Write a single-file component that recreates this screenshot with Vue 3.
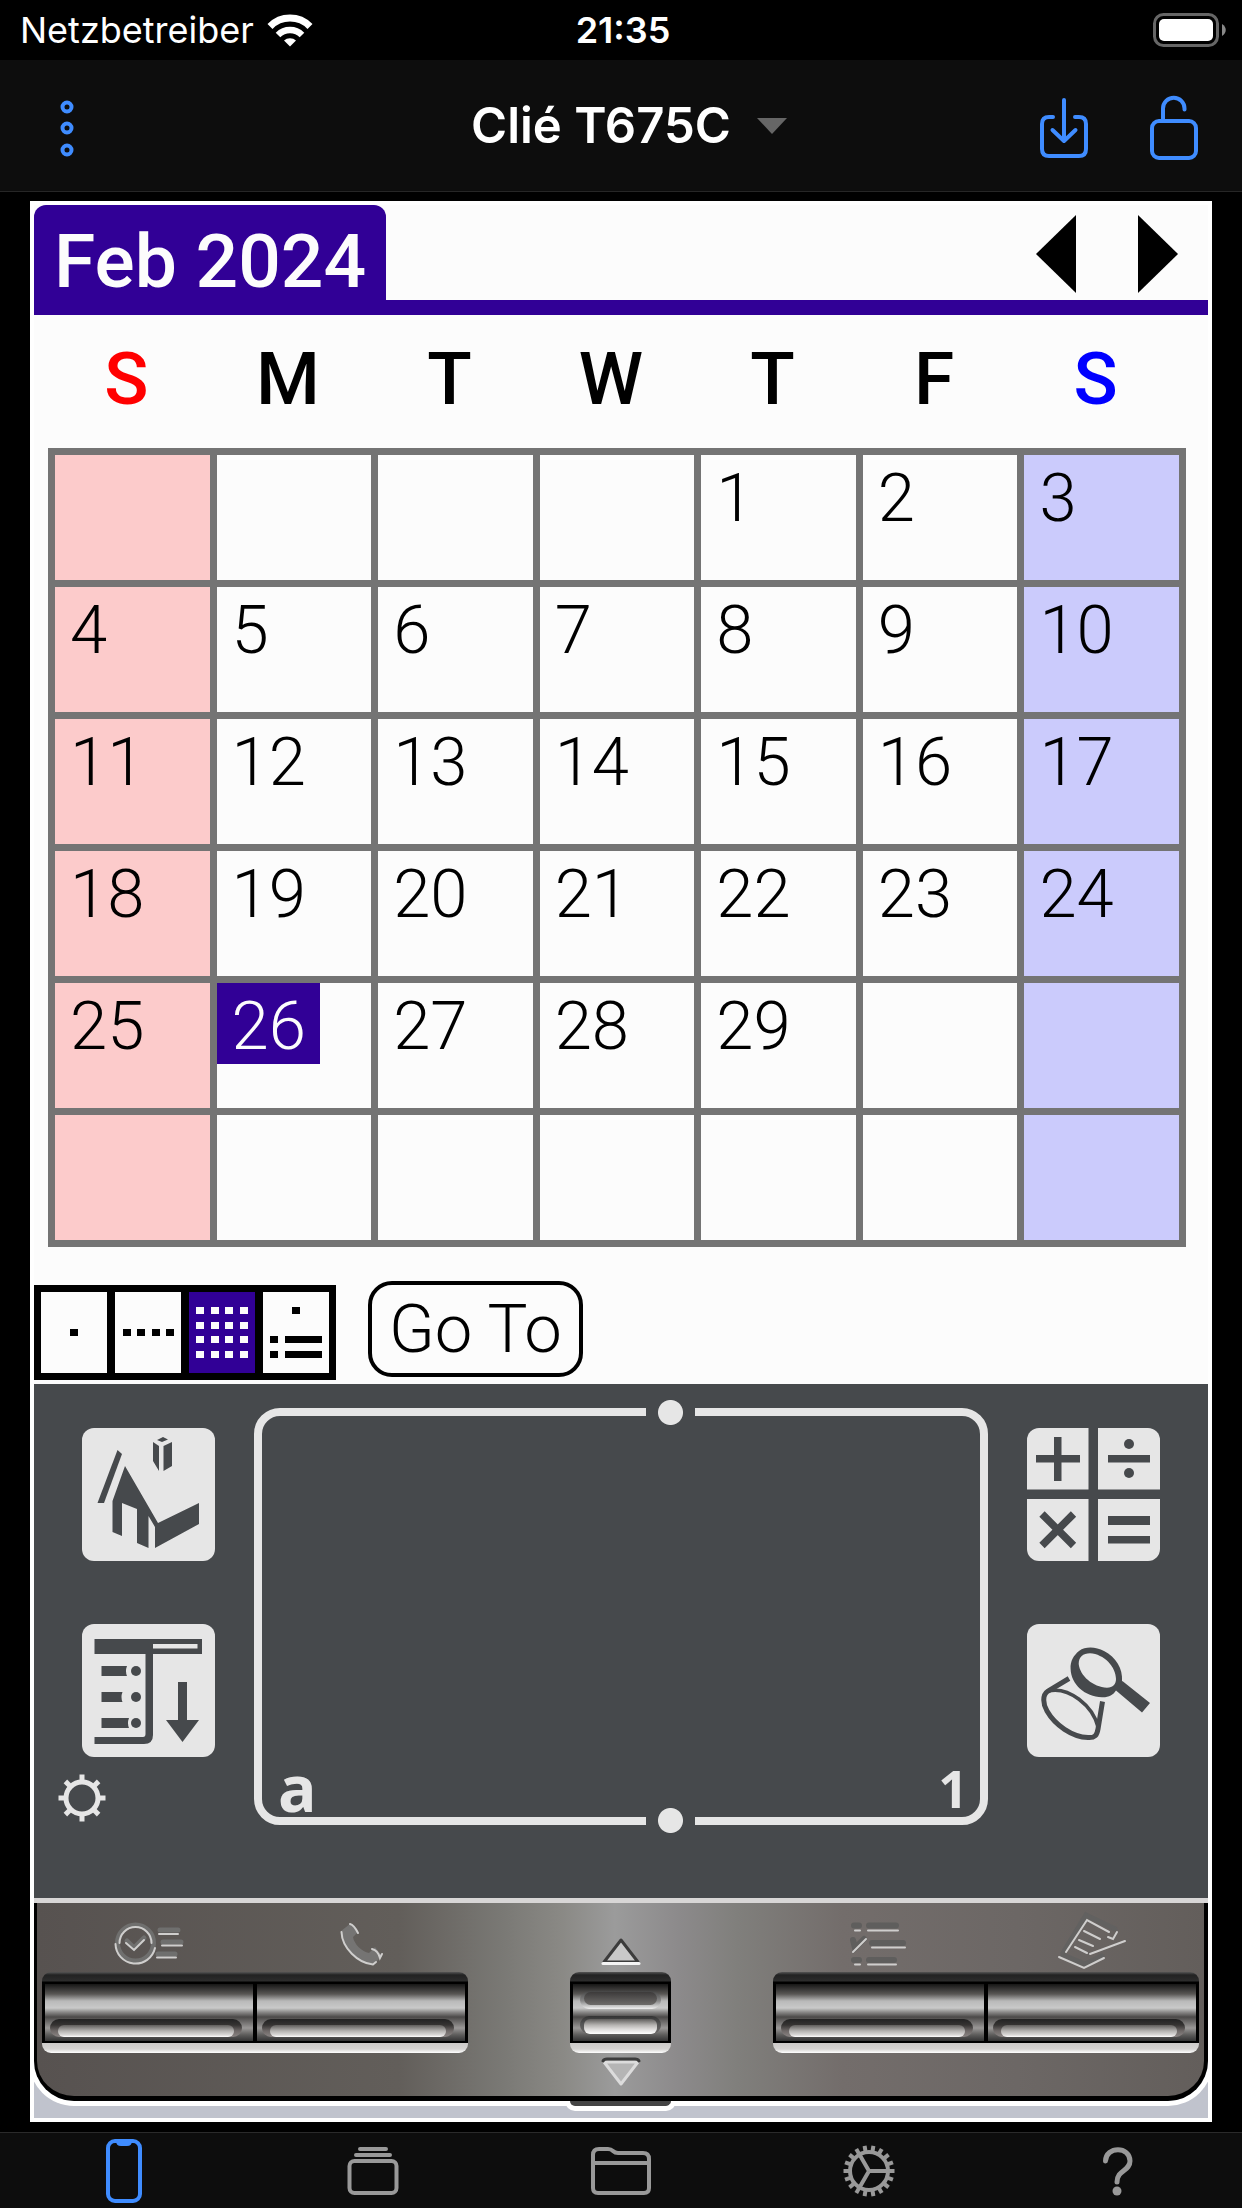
<script setup>
import { ref } from 'vue'

const weekdays = ['S', 'M', 'T', 'W', 'T', 'F', 'S']
const firstOffset = 4
const daysInMonth = 29
const selected = ref(26)
const view = ref('month')

const weeks = Array.from({ length: 6 }, (_, r) =>
  Array.from({ length: 7 }, (_, c) => {
    const day = r * 7 + c - firstOffset + 1
    return day >= 1 && day <= daysInMonth ? day : null
  })
)

const views = [
  { id: 'day', label: 'Day', marks: [[29, 37, 8]] },
  { id: 'week', label: 'Week', marks: [8, 22, 37, 51].map((x) => [x, 37, 8]) },
  { id: 'month', label: 'Month', marks: [15, 30, 44, 59].flatMap((y) => [7, 22, 36, 51].map((x) => [x, y, 8])) },
  { id: 'agenda', label: 'Agenda', marks: [[29, 15, 8], [7, 44, 8], [22, 44, 37], [7, 59, 8], [22, 59, 37]] }
]

const banks = [
  [
    { label: 'Date Book', icon: 'date' },
    { label: 'Address', icon: 'phone' }
  ],
  [
    { label: 'To Do', icon: 'todo' },
    { label: 'Note Pad', icon: 'note' }
  ]
]

const teeth = Array.from({ length: 18 }, (_, i) => i * 20 + 10)
const rays = [0, 45, 90, 135, 180, 225, 270, 315]
</script>

<template>
  <div class="app">
    <div class="status">
      <div class="carrier">
        <span>Netzbetreiber</span>
        <svg width="46" height="34" viewBox="0 0 46 34" fill="none" stroke="#fff" stroke-width="7">
          <path d="M3 13.500A28 28 0 0 1 43 13.500" />
          <path d="M11 22A17 17 0 0 1 35 22" stroke-width="6.500" />
          <path d="M17 27.500A9 9 0 0 1 29 27.500L23 33.500Z" fill="#fff" stroke="none" />
        </svg>
      </div>
      <span class="clock">21:35</span>
      <svg class="battery" width="73" height="34" viewBox="0 0 73 34">
        <rect x="1.500" y="1.500" width="63" height="31" rx="9" fill="none" stroke="#666" stroke-width="3" />
        <rect x="6" y="6" width="54" height="22" rx="5" fill="#fff" />
        <path d="M69 11c5 3 5 9 0 12z" fill="#888" />
      </svg>
    </div>

    <header class="toolbar">
      <button class="icon-btn" aria-label="Menu">
        <svg width="14" height="62" viewBox="0 0 14 62" fill="none" stroke="#3f8cff" stroke-width="4">
          <circle cx="7" cy="12" r="4.500" /><circle cx="7" cy="33" r="4.500" /><circle cx="7" cy="55" r="4.500" />
        </svg>
      </button>
      <button class="title">
        Clié T675C
        <svg width="30" height="16" viewBox="0 0 30 16"><path d="M0 0H30L15 16Z" fill="#666" /></svg>
      </button>
      <div class="actions">
        <button class="icon-btn" aria-label="Save">
          <svg width="48" height="68" viewBox="0 0 48 68" fill="none" stroke="#3f8cff" stroke-width="4" stroke-linecap="round" stroke-linejoin="round">
            <path d="M13 25H9Q2 25 2 32V57Q2 64 9 64H39Q46 64 46 57V32Q46 25 39 25H35" />
            <path d="M24 8V48M12.500 38L24 49L35.500 38" />
          </svg>
        </button>
        <button class="icon-btn" aria-label="Unlock">
          <svg width="48" height="68" viewBox="0 0 48 68" fill="none" stroke="#3f8cff" stroke-width="4" stroke-linecap="round" stroke-linejoin="round">
            <rect x="2" y="29" width="44" height="37" rx="7" />
            <path d="M13 29V16.500A10.750 10.750 0 0 1 34.500 16.500V17.500" />
          </svg>
        </button>
      </div>
    </header>

    <main class="device">
      <section class="screen">
        <div class="month-bar">
          <h1 class="month">Feb 2024</h1>
          <div class="pager">
            <button aria-label="Previous month">
              <svg width="40" height="78" viewBox="0 0 40 78"><path d="M40 0V78L0 39Z" /></svg>
            </button>
            <button aria-label="Next month">
              <svg width="40" height="78" viewBox="0 0 40 78"><path d="M0 0V78L40 39Z" /></svg>
            </button>
          </div>
        </div>

        <table class="calendar">
          <thead>
            <tr>
              <th v-for="(d, i) in weekdays" :key="i" :class="{ sun: i === 0, sat: i === 6 }">{{ d }}</th>
            </tr>
          </thead>
          <tbody>
            <tr v-for="(week, r) in weeks" :key="r">
              <td v-for="(day, c) in week" :key="c" :class="{ sun: c === 0, sat: c === 6 }">
                <button v-if="day" class="day" :class="{ on: day === selected }" @click="selected = day">{{ day }}</button>
              </td>
            </tr>
          </tbody>
        </table>

        <div class="controls">
          <div class="views">
            <button
              v-for="v in views" :key="v.id" :aria-label="v.label"
              :aria-pressed="view === v.id" :class="{ on: view === v.id }" @click="view = v.id"
            >
              <svg width="66" height="81" viewBox="0 0 66 81" fill="currentColor">
                <rect v-for="(m, i) in v.marks" :key="i" :x="m[0]" :y="m[1]" :width="m[2]" height="7" />
              </svg>
            </button>
          </div>
          <button class="goto">Go To</button>
        </div>
      </section>

      <section class="silk">
        <div class="silk-col">
          <button class="silk-btn" aria-label="Home">
            <svg width="133" height="133" viewBox="0 0 133 133">
              <path d="M71 14L77 18V43L71 33ZM81.500 18L90 14V38L81.500 43ZM75 12L81 9L86 11.500L80 14Z" />
              <path d="M35.500 22L40 26L22 75H15.500Z" />
              <path d="M43 38L76 95L117 75V96L73 120V99L66.500 88V120L55 115V81L40 75V108L30.500 104V73Z" />
            </svg>
          </button>
          <button class="silk-btn" aria-label="Application menu">
            <svg width="133" height="133" viewBox="0 0 133 133">
              <path fill-rule="evenodd" d="M12.500 15H120V30H71V111Q71 120 62 120H12.500V113H61Q63.500 113 63.500 110V30H12.500ZM71 20V24.500H115.500V20Z" />
              <path d="M19.500 42H45Q43 47 45 52H19.500ZM19.500 68H40.500Q38.500 73 40.500 78H19.500ZM19.500 94H47Q45 99 47 104H19.500Z" />
              <circle cx="54" cy="47" r="5" /><circle cx="54" cy="73" r="5" /><circle cx="54" cy="99" r="5" />
              <path d="M96 58H105V96H117L100.500 118L84 96H96Z" />
            </svg>
          </button>
          <button class="contrast" aria-label="Contrast">
            <svg width="48" height="48" viewBox="-24 -24 48 48" fill="none" stroke="#e6e6e6" stroke-width="5">
              <circle r="16" />
              <path v-for="a in rays" :key="a" d="M0 -17V-23.500" :transform="`rotate(${a})`" />
            </svg>
          </button>
        </div>

        <div class="graffiti">
          <i class="pin top"></i>
          <i class="pin bottom"></i>
          <span class="letters">a</span>
          <span class="digits">1</span>
        </div>

        <div class="silk-col">
          <button class="silk-btn calc" aria-label="Calculator">
            <svg width="133" height="133" viewBox="0 0 133 133">
              <path d="M61.500 0H71V61.500H133V71H71V133H61.500V71H0V61.500H61.500Z" />
              <path d="M27 9H34.500V27H53V34.500H34.500V53H27V34.500H9V27H27Z" />
              <path d="M81 27H123V34.500H81ZM81 88H123V97H81ZM81 108H123V115.500H81Z" />
              <circle cx="102" cy="16" r="5" /><circle cx="102" cy="45" r="5" />
              <path d="M15 86L46.500 117.500M46.500 86L15 117.500" stroke="#46494c" stroke-width="7.500" />
            </svg>
          </button>
          <button class="silk-btn" aria-label="Find">
            <svg width="133" height="133" viewBox="0 0 133 133">
              <path fill-rule="evenodd" d="M43.600 45C43 37 47 31 52 27C59 22 69 23 77 27C89 33 96 45 95 57L96 57.500L123 79L115 88.500L89 66.500C86 71 82 73.500 75 73.300C58 73 44 60 43.600 45ZM51.700 40C53 52 66 63 80 63.700C86 63.700 89 60 89 55C89 43 77 30 63 29.300C56 29.300 51.700 33 51.700 40Z" />
              <g fill="none" stroke="#46494c" stroke-width="5">
                <path d="M42 54.500L21 67C15 71 16 80 20 87C28 101 45 113 61 113.500C68 114 70 111 71 105L75.500 77.500" />
                <path d="M21 67C42 62 66 82 71 103" stroke-width="3.500" />
              </g>
            </svg>
          </button>
        </div>
      </section>

      <section class="case">
        <div class="panel">
          <template v-for="(bank, b) in banks" :key="b">
            <div class="bank">
              <div class="glyphs">
                <svg v-for="k in bank" :key="k.icon" width="72" height="60" viewBox="0 0 72 60" fill="none" stroke-linecap="round">
                  <g v-if="k.icon === 'date'">
                    <g stroke="#6f6f6e" stroke-width="5">
                      <circle cx="22.500" cy="32" r="18" />
                      <path d="M14 30L21 37L31 27M47 19H65M50 31H68M45 43H62" />
                    </g>
                    <g stroke="#cfcecd" stroke-width="2">
                      <circle cx="22.500" cy="32" r="16" stroke-dasharray="50 51" transform="rotate(180 22.500 32)" />
                      <path d="M2.500 33A20 20 0 0 0 42 37M13 32L21 39L31 29M46 23H65M49 34.500H69M44 46.500H63" />
                    </g>
                  </g>
                  <g v-else-if="k.icon === 'phone'">
                    <path d="M15 20L24 13L32 21L27 26C28 33 36 41 43 42L49 36L56 45L48 53C32 52 15 37 15 20Z" fill="#757473" />
                    <g stroke="#cfcecd" stroke-width="2">
                      <path d="M15.500 21C16 37 32 52 47 53.500L50 51M24 13C28 14 30 18 32 22M46 38C50 39 53 43 54 47L56 43" />
                    </g>
                  </g>
                  <g v-else-if="k.icon === 'todo'">
                    <path d="M10 14.500H15M25 14.500H52M28 32H59M25 49H50M10 49H15M9 29L11 37L20 28" stroke="#5f5e5d" stroke-width="6" />
                    <path d="M11 19.500H16M24 19.500H54M28 36.500H61M24 53.500H52M11 53.500H16M9 41L22 28" stroke="#cfcecd" stroke-width="2" />
                  </g>
                  <g v-else>
                    <path d="M6 42L29 4L58 18M6 44L28 53L45 45" stroke="#626160" stroke-width="5" />
                    <path d="M9 41L30 9L52 21M2 46L27 57L47 47M27 20L43 28M22 29L36 35M18 36L30 42M33 43L68 30M51 26L56 28L60 21" stroke="#cfcecd" stroke-width="2" />
                  </g>
                </svg>
              </div>
              <div class="rack">
                <button v-for="k in bank" :key="k.label" class="key" :aria-label="k.label"><i class="groove"></i></button>
              </div>
            </div>
            <div v-if="b === 0" class="rocker">
              <svg width="42" height="30" viewBox="0 0 42 30">
                <path d="M21 3L38 25H4Z" fill="#c9c9c9" stroke="#3c3c3c" stroke-width="3" stroke-linejoin="round" />
                <path d="M3 26.500H39" stroke="#f4f4f4" stroke-width="3" stroke-linecap="round" />
              </svg>
              <div class="rack">
                <button class="key wheel" aria-label="Scroll"><i class="groove dim"></i><i class="groove"></i></button>
              </div>
              <svg width="42" height="30" viewBox="0 0 42 30">
                <path d="M21 27L38 5H4Z" fill="#b5b5b5" stroke="#dcdcdc" stroke-width="3" stroke-linejoin="round" />
                <path d="M3 4Q4 2 7 2H35Q38 2 39 4" fill="none" stroke="#3c3c3c" stroke-width="3" stroke-linecap="round" />
              </svg>
            </div>
          </template>
        </div>
      </section>
    </main>

    <nav class="tabs">
      <a href="#device" aria-label="Device" class="active">
        <svg width="36" height="64" viewBox="0 0 36 64" fill="none" stroke="currentColor" stroke-width="4">
          <rect x="2" y="2" width="32" height="60" rx="7" />
          <path d="M10 2H26Q26 7 21 7H15Q10 7 10 2Z" fill="currentColor" stroke="none" />
        </svg>
      </a>
      <a href="#sessions" aria-label="Sessions">
        <svg width="52" height="64" viewBox="0 0 52 64" fill="none" stroke="currentColor" stroke-width="4" stroke-linecap="round">
          <path d="M13 10H39M9 16H43" />
          <rect x="2.500" y="22" width="47" height="32" rx="5" />
        </svg>
      </a>
      <a href="#files" aria-label="Files">
        <svg width="60" height="64" viewBox="0 0 60 64" fill="none" stroke="currentColor" stroke-width="4">
          <path d="M2 16Q2 10 8 10H17Q20 10 22 12Q24 14 27 14H52Q58 14 58 20V49Q58 54 53 54H7Q2 54 2 49ZM2 24H58" />
        </svg>
      </a>
      <a href="#settings" aria-label="Settings">
        <svg width="52" height="64" viewBox="-26 -32 52 64" fill="none" stroke="currentColor" stroke-width="4">
          <circle r="19" />
          <path v-for="a in teeth" :key="a" d="M0 -20V-25.500" :transform="`rotate(${a})`" />
          <path d="M0 0H19M0 0L-9.500 -16.500M0 0L-9.500 16.500" />
        </svg>
      </a>
      <a href="#help" aria-label="Help">
        <svg width="30" height="64" viewBox="0 0 30 64" fill="none" stroke="currentColor" stroke-width="5" stroke-linecap="round">
          <path d="M2.500 22C3 7 27 7 27 22C27 32 14 31 14 43" />
          <circle cx="14" cy="52" r="4.500" fill="currentColor" stroke="none" />
        </svg>
      </a>
    </nav>
  </div>
</template>

<style>
body {
  margin: 0;
  background: #000;
}
</style>

<style scoped>
.app {
  display: flex;
  flex-direction: column;
  min-height: 100vh;
  background: #000;
  color: #fff;
  font-family: Inter, "Liberation Sans", sans-serif;
}
button {
  padding: 0;
  border: 0;
  background: none;
  color: inherit;
  font: inherit;
}
svg {
  display: block;
}

.status {
  display: grid;
  grid-template-columns: 1fr auto 1fr;
  align-items: center;
  height: 60px;
  padding: 0 16px 0 20px;
  font-size: 36px;
}
.carrier {
  display: flex;
  align-items: center;
  gap: 13px;
}
.clock {
  font-weight: 600;
}
.battery {
  justify-self: end;
}

.toolbar {
  display: grid;
  grid-template-columns: 1fr auto 1fr;
  align-items: center;
  height: 131px;
  padding: 0 44px 0 60px;
  background: #0d0d0d;
  border-bottom: 1px solid #262626;
}
.title {
  display: flex;
  align-items: center;
  gap: 26px;
  font-size: 49px;
  font-weight: 600;
}
.actions {
  display: flex;
  justify-content: flex-end;
  gap: 62px;
}

.device {
  margin: 9px 30px 8px;
  border: 4px solid #fff;
}
.screen {
  background: #fcfcfc;
  color: #000;
  font-family: Roboto, "Liberation Sans", sans-serif;
}
.month-bar {
  display: flex;
  justify-content: space-between;
  border-bottom: 15px solid #310096;
}
.month {
  box-sizing: border-box;
  margin: 0;
  height: 95px;
  padding: 17px 20px 0;
  border-radius: 12px 12px 0 0;
  background: #310096;
  color: #fcfcfc;
  font-size: 75px;
  font-weight: 500;
  line-height: 78px;
}
.pager {
  display: flex;
  gap: 62px;
  padding: 10px 30px 0 0;
}
.pager button {
  align-self: flex-start;
}

.calendar {
  width: calc(100% - 36px);
  margin: 0 22px 0 14px;
  table-layout: fixed;
  border-collapse: collapse;
}
.calendar th {
  height: 128px;
  padding: 0 12px 5px 0;
  font-size: 73px;
  font-weight: 500;
  line-height: 100px;
}
th.sun {
  color: #f00;
}
th.sat {
  color: #00f;
}
.calendar td {
  height: 125px;
  padding: 0;
  border: 7px solid #747474;
  vertical-align: top;
}
td.sun {
  background: #fccbcb;
}
td.sat {
  background: #cbcbfc;
}
.day {
  display: block;
  padding: 5px 14px 0 15px;
  font-size: 67px;
  font-weight: 300;
  line-height: 76px;
}
.day.on {
  background: #310096;
  color: #fcfcfc;
}

.controls {
  display: flex;
  align-items: flex-start;
  gap: 32px;
  padding: 34px 0 4px;
}
.views {
  display: flex;
  gap: 8px;
  margin-top: 4px;
  padding: 7px;
  background: #000;
}
.views button {
  background: #fcfcfc;
}
.views .on {
  background: #310096;
  color: #fcfcfc;
}
.goto {
  height: 96px;
  padding: 0 17px;
  border: 4px solid #000;
  border-radius: 24px;
  font-size: 67px;
  font-weight: 300;
  line-height: 88px;
}

.silk {
  display: flex;
  gap: 39px;
  padding: 24px 48px 73px;
  background: #46494c;
  border-bottom: 5px solid #d8d6d6;
}
.silk-col {
  flex: none;
  width: 133px;
  padding-top: 20px;
}
.silk-btn {
  display: block;
  margin-bottom: 63px;
  border-radius: 12px;
  overflow: hidden;
  background: #e6e6e6;
  fill: #46494c;
}
.contrast {
  display: block;
  margin: -46px 0 0 -24px;
}
.graffiti {
  position: relative;
  box-sizing: border-box;
  flex: 1;
  height: 417px;
  display: flex;
  align-items: flex-end;
  justify-content: space-between;
  padding: 0 12px 5px 16px;
  border: 8px solid #e6e6e6;
  border-radius: 26px;
  color: #e6e6e6;
  font-family: "Open Sans", "Noto Sans", sans-serif;
  font-weight: 700;
  line-height: 48px;
}
.letters {
  font-size: 64px;
}
.digits {
  font-size: 52px;
}
.pin {
  position: absolute;
  left: 57%;
  width: 25px;
  height: 25px;
  margin-left: -25px;
  border: solid #46494c;
  border-width: 0 12px;
  background: radial-gradient(circle, #e6e6e6 12px, #46494c 13px);
}
.pin.top {
  top: -16px;
}
.pin.bottom {
  bottom: -16px;
}

.case {
  overflow: hidden;
  padding-bottom: 17px;
  background: #c0c3cd;
}
.panel {
  position: relative;
  display: flex;
  gap: 102px;
  height: 193px;
  padding: 0 5px;
  border: solid #000;
  border-width: 0 4px 5px 3px;
  border-radius: 0 0 40px 40px;
  background: linear-gradient(90deg, #575250, #625e5a 31%, #7a7975 40%, #8a8985 45%, #9b9b9b 49.5%, #8c8a8b 55%, #807f7c 60%, #736d6b 69%, #6c6765 84%, #635e5b);
  box-shadow: 0 0 0 5px #fff;
}
.panel::after {
  content: "";
  position: absolute;
  top: 198px;
  left: 50%;
  width: 101px;
  height: 5px;
  margin-left: -56px;
  border: 5px solid #fff;
  border-top: 0;
  border-radius: 0 0 12px 12px;
  background: #444;
}
.bank {
  flex: 1;
}
.glyphs {
  display: flex;
  justify-content: space-around;
  height: 61px;
  padding-top: 8px;
}
.rack {
  display: flex;
  gap: 4px;
  padding: 12px 3px;
  border-radius: 9px;
  background: linear-gradient(#555, #222 3px, #2c2c2c 9px, #000 10px, #000 71px, #cccac8 71px, #d6d4d2 77px, #fff);
}
.key {
  box-sizing: border-box;
  flex: 1;
  height: 57px;
  padding: 31px 11px 0 5px;
  background: linear-gradient(#161616, #585654 10px, #b9b9b9 17px, #c9c9c9 24px, #8c8b8a 28px, #4b4948 33px, #9a9897 44px, #5c5b5a 51px, #333);
}
.groove {
  display: flex;
  box-sizing: border-box;
  height: 18px;
  padding: 6px 8px 0;
  border-radius: 9px;
  background: linear-gradient(#222, #353332 6px, #6f6968 12px, #8a8483);
}
.groove::after {
  content: "";
  flex: 1;
  border-radius: 6px;
  background: linear-gradient(#5f5d5b, #b5b3b1 6px, #dcdad9 10px, #fff);
}
.rocker {
  flex: none;
  width: 101px;
}
.rocker > svg {
  margin: 0 auto;
}
.rocker > svg:first-child {
  padding: 34px 0 5px;
}
.rocker > svg:last-child {
  padding-top: 4px;
}
.wheel {
  padding: 6px 7px 0;
}
.wheel .groove {
  margin-bottom: 7px;
  padding: 3px 4px 0;
  background: linear-gradient(#333, #555 8px, #6a6867);
}
.wheel .dim {
  background: linear-gradient(#444, #888 10px, #f0f0f0);
}
.wheel .dim,
.wheel .dim::after {
  border-radius: 9px;
}
.wheel .dim {
  padding: 1px 4px 4px;
}
.wheel .dim::after {
  background: linear-gradient(#3c3a3a, #6e6c6a);
}

.tabs {
  display: grid;
  grid-template-columns: repeat(5, 1fr);
  margin-top: auto;
  height: 75px;
  border-top: 1px solid #2a2a2a;
  background: #0d0d0d;
}
.tabs a {
  display: flex;
  justify-content: center;
  padding-top: 6px;
  color: #999;
}
.tabs .active {
  color: #3f8cff;
}
</style>
